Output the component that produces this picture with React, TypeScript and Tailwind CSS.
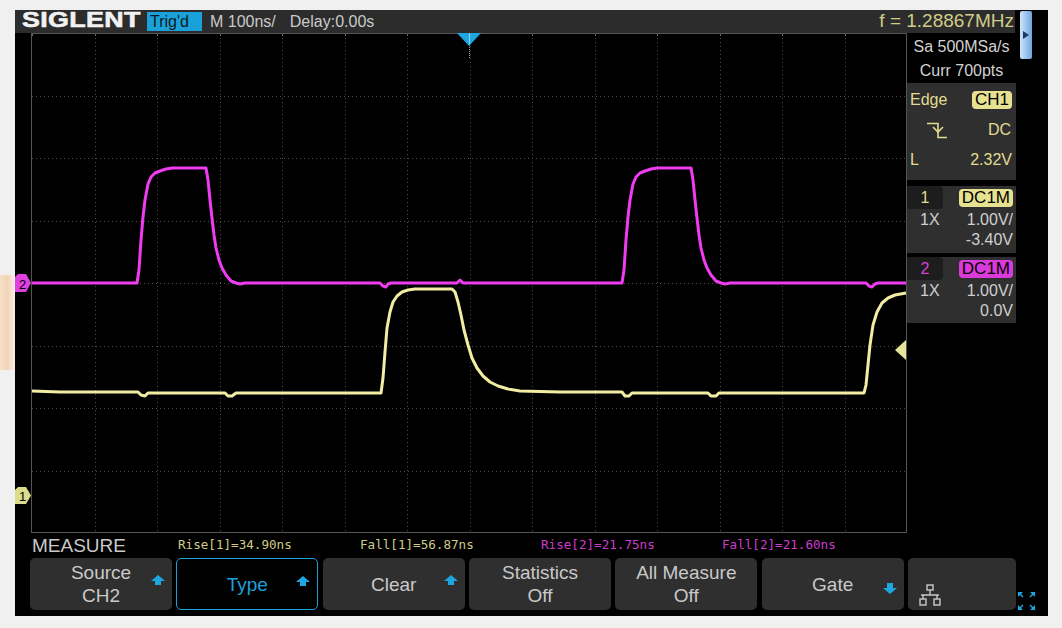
import React from 'react';

const YEL = '#f1eda2';
const MAG = '#f03cf0';

const magPts =
  '32,283 137,283 139,270 141,240 143,217 145,200 148,184 151,177 155,173 160,171 166,169 172,168 206,168 208,180 210,200 212,218 214,235 216,248 219,260 222,268 226,275 231,281 236,283 240,284 245,283 380,283 383,286 386,287 388,284 391,283 457,283 460,280 463,283 622,283 624,270 626,240 628,217 630,200 633,184 636,177 640,173 645,171 651,169 657,168 691,168 693,180 695,200 697,218 699,235 701,248 704,260 707,268 711,275 716,281 721,283 725,284 730,283 866,283 869,286 872,287 875,284 878,283 906,283';

const yelPts =
  '32,391 60,392 138,392 141,395 145,396 148,393 225,393 228,396 232,396 236,393 381,393 383,378 385,352 387,328 390,312 393,302 397,296 402,292 408,290 415,289 452,289 455,292 458,302 461,315 464,330 468,345 472,358 477,368 483,376 490,382 498,386 508,389 520,391 560,392 622,392 625,396 629,396 632,393 708,393 711,396 716,396 719,393 864,393 866,385 868,365 870,345 873,325 877,312 882,303 888,298 895,295 906,293';

const Plot: React.FC = () => {
  const vx = Array.from({ length: 13 }, (_, i) => Math.round(32 + 62.5 * (i + 1)) + 0.5);
  const hy = Array.from({ length: 7 }, (_, i) => Math.round(33 + 62.5 * (i + 1)) + 0.5);
  const ticks = Array.from({ length: 15 }, (_, i) => Math.round(32 + 62.5 * i) + 0.5);
  return (
    <svg width={892} height={500} viewBox="15 33 892 500" className="block shrink-0">
      <rect x={15} y={33} width={892} height={500} fill="#000" />
      {vx.map((x) => (
        <line key={'v' + x} x1={x} y1={34} x2={x} y2={532} stroke="#4d4d4d" strokeDasharray="1 3" />
      ))}
      {hy.map((y) => (
        <line key={'h' + y} x1={32} y1={y} x2={906} y2={y} stroke="#4d4d4d" strokeDasharray="1 3" />
      ))}
      {ticks.map((x) => (
        <line key={'t' + x} x1={x} y1={33} x2={x} y2={36} stroke="#666" />
      ))}
      <rect x={31.5} y={33.5} width={875} height={499} fill="none" stroke="#555" />
      <line x1={469.5} y1={45} x2={469.5} y2={58} stroke="#8ab" strokeDasharray="1 1" />
      <polygon points="457,33 481,33 469,46" fill="#1ea6e0" />
      <line x1={469.5} y1={33} x2={469.5} y2={44} stroke="#8fd6f5" />
      <polyline points={magPts} fill="none" stroke={MAG} strokeWidth={3} strokeLinejoin="round" />
      <polyline points={yelPts} fill="none" stroke={YEL} strokeWidth={3} strokeLinejoin="round" />
      <polygon points="906,340 906,360 895,350" fill="#e6e39a" />
      <polygon points="18,274 26,274 31,283 26,292 15,292 15,277" fill="#e040e0" />
      <text x={19} y={288.5} fontSize={13} fill="#000" fontFamily="Liberation Sans, sans-serif">2</text>
      <polygon points="18,487 26,487 31,495.5 26,504 15,504 15,490" fill="#dcdc8c" />
      <text x={19} y={500.5} fontSize={13} fill="#000" fontFamily="Liberation Sans, sans-serif">1</text>
    </svg>
  );
};

const UpArrow: React.FC = () => (
  <svg width={14} height={10} viewBox="0 0 14 10" className="absolute right-[7px] top-[17px]">
    <polygon points="7,0 14,6 10,6 10,10 4,10 4,6 0,6" fill="#1ea6e0" />
  </svg>
);

const DownArrow: React.FC = () => (
  <svg width={14} height={11} viewBox="0 0 14 11" className="absolute right-[7px] top-[25px]">
    <polygon points="4,0 10,0 10,5 14,5 7,11 0,5 4,5" fill="#1ea6e0" />
  </svg>
);

const SoftKey: React.FC<{ lines: string[]; arrow?: 'up' | 'down'; active?: boolean }> = ({ lines, arrow, active }) => (
  <div
    className={
      active
        ? 'relative flex h-[52px] w-[142px] shrink-0 flex-col items-center justify-center rounded-[5px] border border-[#1ba1da] bg-black text-[#1ba1da]'
        : 'relative flex h-[52px] w-[142px] shrink-0 flex-col items-center justify-center rounded-[5px] bg-[#2f2f2f] text-[#c9c9c9]'
    }
  >
    {lines.map((l) => (
      <span key={l} className="text-[19px] leading-[23px]">{l}</span>
    ))}
    {arrow === 'up' && <UpArrow />}
    {arrow === 'down' && <DownArrow />}
  </div>
);

const ChBlock: React.FC<{ n: string; scale: string; off: string; labelCls: string; badgeCls: string; h: string }> = ({ n, scale, off, labelCls, badgeCls, h }) => (
  <div className={'bg-[#2f2f2f] text-[16px] text-[#cfcfcf] ' + h}>
    <div className="flex h-[23px] items-center justify-between">
      <div className={'flex h-[23px] w-[36px] items-center justify-center rounded-r-[4px] bg-[#1d1d1d] ' + labelCls}>{n}</div>
      <div className={'mr-[3px] h-[18px] rounded-[4px] px-[3px] text-[17px] leading-[18px] text-black ' + badgeCls}>DC1M</div>
    </div>
    <div className="flex h-[21px] items-center justify-between pl-[13px] pr-[3px]">
      <span>1X</span>
      <span>{scale}</span>
    </div>
    <div className="flex h-[20px] items-center justify-end pr-[3px]">{off}</div>
  </div>
);

const App: React.FC = () => {
  return (
    <div className="flex h-[628px] w-[1062px] bg-[#f0f0f0] font-['Liberation_Sans',Arial,sans-serif]">
      <div className="w-[15px] shrink-0">
        <div className="mt-[275px] h-[95px] w-[15px] bg-linear-to-r from-[#f6e0cb] via-[#f2d3b6] to-[#fbefe6]" />
      </div>
      <div className="mt-[10px] flex h-[606px] w-[1033px] shrink-0 bg-black">
        {/* main column */}
        <div className="flex w-[1001px] shrink-0 flex-col">
          <div className="flex h-[23px] w-[1000px] items-center bg-[#2c2c2c] text-[16px] text-[#c9c9c9]">
            <div className="ml-[7px] w-[125px] overflow-visible">
              <span className="inline-block origin-left scale-x-[1.22] text-[22px] font-bold leading-none tracking-[0.3px] text-[#f2f2f2] [-webkit-text-stroke:0.6px_#f2f2f2]">SIGLENT</span>
            </div>
            <div className="flex h-[19px] w-[55px] items-center bg-[#1ba1da] pl-[3px] text-[16px] text-[#0d1a20]">Trig'd</div>
            <span className="ml-[8px]">M 100ns/</span>
            <span className="ml-[14px]">Delay:0.00s</span>
            <span className="ml-auto pr-[1px] text-[19px] text-[#d0cd88]">f = 1.28867MHz</span>
          </div>
          <div className="flex h-[500px]">
            <Plot />
            <div className="flex w-[109px] shrink-0 flex-col text-[16px] text-[#d2d2d2]">
              <div className="flex h-[50px] flex-col items-center pt-[2px]">
                <span className="leading-[24px]">Sa 500MSa/s</span>
                <span className="leading-[24px]">Curr 700pts</span>
              </div>
              <div className="h-[97px] bg-[#2f2f2f] pt-[2px] text-[#e0dc90]">
                <div className="flex h-[30px] items-center justify-between pl-[3px] pr-[4px]">
                  <span>Edge</span>
                  <span className="h-[18px] rounded-[4px] bg-[#e6e28f] px-[3px] text-[17px] leading-[18px] text-black">CH1</span>
                </div>
                <div className="flex h-[30px] items-center justify-between pl-[19px] pr-[5px]">
                  <svg width={22} height={18} viewBox="0 0 22 18">
                    <path d="M1 2.5 H12 V16.5 H21" fill="none" stroke="#e0dc90" strokeWidth={1.6} />
                    <path d="M7 6 L12 11 L17 6" fill="none" stroke="#e0dc90" strokeWidth={1.6} />
                  </svg>
                  <span>DC</span>
                </div>
                <div className="flex h-[30px] items-center justify-between pl-[3px] pr-[4px]">
                  <span>L</span>
                  <span>2.32V</span>
                </div>
              </div>
              <div className="h-[6px]" />
              <ChBlock n="1" scale="1.00V/" off="-3.40V" labelCls="text-[#e0dc90]" badgeCls="bg-[#e6e28f]" h="h-[67px]" />
              <div className="h-[4px]" />
              <ChBlock n="2" scale="1.00V/" off="0.0V" labelCls="text-[#d840d8]" badgeCls="bg-[#da3ada]" h="h-[66px]" />
            </div>
          </div>
          <div className="flex h-[25px] items-center pl-[17px] font-['DejaVu_Sans_Mono',monospace] text-[12.6px]">
            <span className="w-[146px] font-['Liberation_Sans',Arial,sans-serif] text-[19px] leading-[25px] text-[#c9c9c9]">MEASURE</span>
            <span className="w-[182px] text-[#cfcc86]">Rise[1]=34.90ns</span>
            <span className="w-[181px] text-[#cfcc86]">Fall[1]=56.87ns</span>
            <span className="w-[181px] text-[#cc3ccc]">Rise[2]=21.75ns</span>
            <span className="text-[#cc3ccc]">Fall[2]=21.60ns</span>
          </div>
          <div className="flex h-[52px] gap-[4.33px] pl-[15px]">
            <SoftKey lines={['Source', 'CH2']} arrow="up" />
            <SoftKey lines={['Type']} arrow="up" active />
            <SoftKey lines={['Clear']} arrow="up" />
            <SoftKey lines={['Statistics', 'Off']} />
            <SoftKey lines={['All Measure', 'Off']} />
            <SoftKey lines={['Gate']} arrow="down" />
            <div className="flex h-[52px] w-[108px] shrink-0 items-end rounded-[5px] bg-[#2f2f2f] pb-[3px] pl-[9px]">
              <svg width={26} height={23} viewBox="0 0 26 23">
                <g fill="none" stroke="#c9c9c9" strokeWidth={1.4}>
                  <rect x={10} y={1} width={6} height={5} />
                  <path d="M13 6 V11 M4 11 H22 M6 11 V15 M20 11 V15" />
                  <rect x={3} y={15} width={6} height={6} />
                  <rect x={17} y={15} width={6} height={6} />
                </g>
              </svg>
            </div>
          </div>
        </div>
        {/* right strip */}
        <div className="flex w-[32px] shrink-0 flex-col justify-between">
          <div className="ml-[4px] mt-[1px] flex h-[48px] w-[12px] items-center justify-center rounded-[2px] bg-linear-to-r from-[#cfe4f8] via-[#9cc6ee] to-[#6fa6de]">
            <svg width={6} height={8} viewBox="0 0 6 8">
              <polygon points="0,0 6,4 0,8" fill="#1d3a66" />
            </svg>
          </div>
          <div className="mb-[5px] ml-[1px]">
            <svg width={19} height={20} viewBox="0 0 19 20">
              <g fill="#1ea6e0" stroke="#1ea6e0" strokeWidth={1.5}>
                <path d="M6 6 L2 2" />
                <polygon points="1,1 6,1 1,6" strokeWidth={0} />
                <path d="M13 6 L17 2" />
                <polygon points="18,1 13,1 18,6" strokeWidth={0} />
                <path d="M6 14 L2 18" />
                <polygon points="1,19 6,19 1,14" strokeWidth={0} />
                <path d="M13 14 L17 18" />
                <polygon points="18,19 13,19 18,14" strokeWidth={0} />
              </g>
            </svg>
          </div>
        </div>
      </div>
    </div>
  );
};

export default App;
